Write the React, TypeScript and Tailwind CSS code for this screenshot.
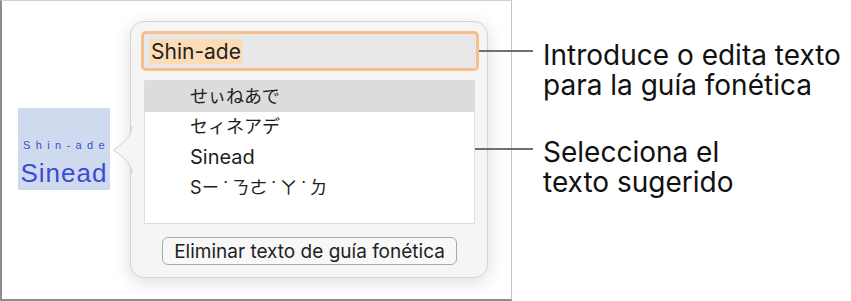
import type { ReactNode } from "react";

const Tone = () => <span className="inline-block w-[12px] text-center">˙</span>;

const suggestions: { key: string; content: ReactNode; selected: boolean; size: string }[] = [
  { key: "hira", content: "せぃねあで", selected: true, size: "text-[18px]" },
  { key: "kata", content: "セィネアデ", selected: false, size: "text-[18px]" },
  { key: "latin", content: "Sinead", selected: false, size: "text-[20px]" },
  {
    key: "bopomofo",
    content: (
      <>
        Sㄧ<Tone />ㄋㄜ<Tone />ㄚ<Tone />ㄉ
      </>
    ),
    selected: false,
    size: "text-[18px]",
  },
];

const uiFont =
  "font-['Inter','Noto_Sans','Noto_Sans_CJK_JP','Noto_Sans_CJK_TC',sans-serif]";

function PopoverArrow() {
  return (
    <svg
      className="absolute left-[-19px] top-[104px]"
      width="21"
      height="48"
      viewBox="0 0 21 48"
      aria-hidden="true"
    >
      <path
        d="M20 0 C20 11, 11 17, 1.5 24 C11 31, 20 37, 20 48 L21 48 L21 0 Z"
        fill="#f5f5f5"
      />
      <path
        d="M20 0 C20 11, 11 17, 1.5 24 C11 31, 20 37, 20 48"
        fill="none"
        stroke="#d2d2d2"
        strokeWidth="1"
      />
    </svg>
  );
}

function PhoneticPopover() {
  return (
    <div className="relative ml-[20px] mt-[20px] flex h-[257px] w-[358px] flex-col items-start rounded-[14px] border border-[#d4d4d4] bg-[#f5f5f5] shadow-[0_4px_18px_rgba(0,0,0,0.14)]">
      <PopoverArrow />

      {/* Editable phonetic text */}
      <div className="ml-[10px] mt-[9px] flex h-[40px] w-[338px] items-center rounded-[5px] border-[3px] border-[#f6bf8e] bg-[#e8e8e8] pl-[6px]">
        <span className="bg-[#fddcb5] px-px text-[21px] leading-[25px] text-[#222]">
          Shin-ade
        </span>
      </div>

      {/* Suggested text */}
      <div className="ml-[13px] mt-[9px] h-[144px] w-[331px] border border-[#dedede] bg-white">
        {suggestions.map((s) => (
          <div
            key={s.key}
            className={`flex h-[30.5px] items-center whitespace-nowrap pl-[45px] text-[#1e1e1e] ${s.size} ${
              s.selected ? "bg-[#dcdcdc]" : ""
            }`}
          >
            {s.content}
          </div>
        ))}
      </div>

      <button
        type="button"
        className="ml-[31px] mt-[13px] flex h-[28px] w-[295px] items-center justify-center rounded-[6px] border border-[#a8a8a8] bg-[#f8f8f8] text-[19px] leading-none text-[#222]"
      >
        Eliminar texto de guía fonética
      </button>
    </div>
  );
}

export default function App() {
  return (
    <div className={`relative flex h-[301px] w-[851px] bg-white ${uiFont}`}>
      {/* Document canvas */}
      <div className="box-border flex h-[301px] w-[512px] shrink-0 items-start border-t border-r border-l-2 border-b-2 border-t-[#cfcfcf] border-r-[#c4c4c4] border-l-[#8c8c8c] border-b-[#8c8c8c]">
        <div className="ml-[16px] mt-[107px] flex h-[82px] w-[92px] shrink-0 flex-col items-center bg-[#cfdaee] font-['Liberation_Sans',Arial,sans-serif] text-[#3a4cd6]">
          <span className="mt-[32px] whitespace-nowrap pl-[5px] text-[11px] leading-none tracking-[5.4px]">
            Shin-ade
          </span>
          <span className="mt-[8px] whitespace-nowrap text-[26px] leading-[28px] tracking-[0.04em]">
            Sinead
          </span>
        </div>
        <PhoneticPopover />
      </div>

      {/* Callout labels */}
      <div className="flex flex-col pl-[31px] pt-[40px] text-[28px] leading-[30px] text-[#111]">
        <p className="whitespace-nowrap">
          Introduce o edita texto
          <br />
          para la guía fonética
        </p>
        <p className="mt-[37px] whitespace-nowrap">
          Selecciona el
          <br />
          texto sugerido
        </p>
      </div>

      {/* Callout leader lines */}
      <div className="absolute left-[479px] top-[50px] h-[1.5px] w-[54px] bg-[#707070]" />
      <div className="absolute left-[475px] top-[148px] h-[1.5px] w-[58px] bg-[#707070]" />
    </div>
  );
}
